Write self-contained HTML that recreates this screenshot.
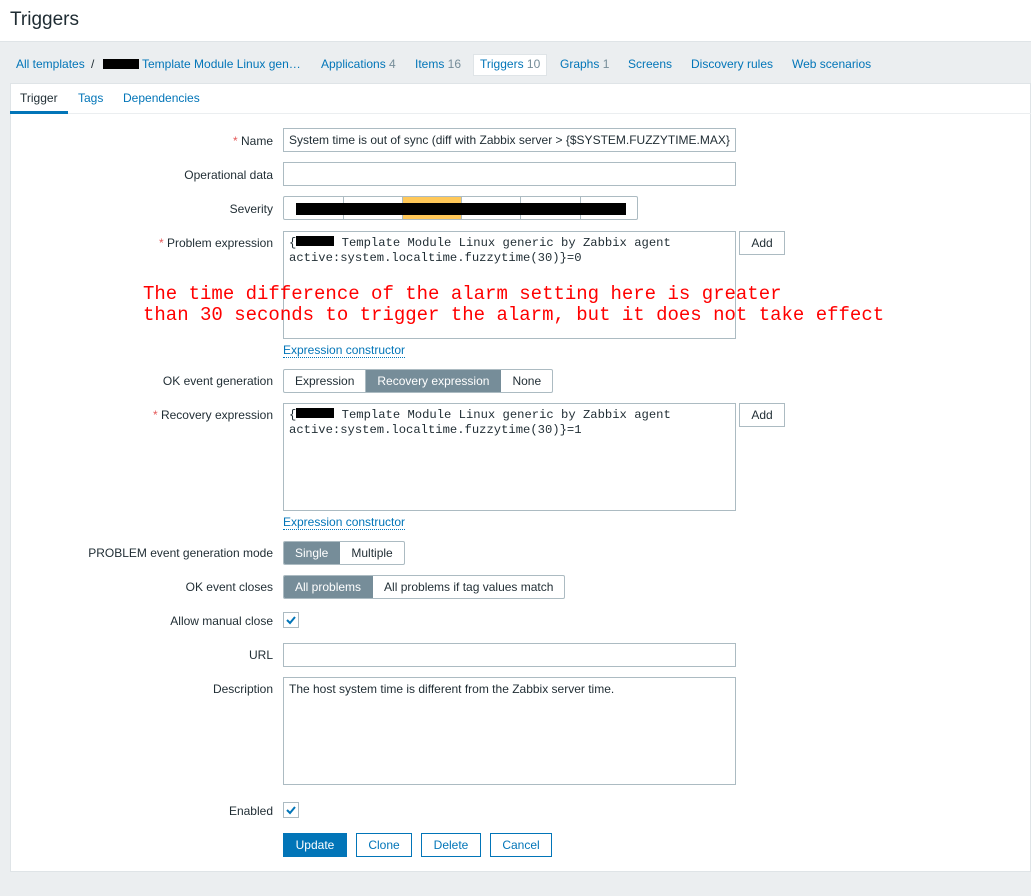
<!DOCTYPE html>
<html><head><style>
*{box-sizing:border-box;margin:0;padding:0}
body{width:1031px;height:896px;background:#ebeef0;font-family:"Liberation Sans",Arial,sans-serif;font-size:12px;color:#1f2c33;position:relative;overflow:hidden}
.a{position:absolute}
.hdr{left:0;top:0;width:1031px;height:42px;background:#fff;border-bottom:1px solid #dfe4e7}
.hdr h1{position:absolute;left:10px;top:9px;font-size:19px;font-weight:normal;color:#1f2c33}
.bc{top:55px;font-size:12px;color:#0275b8;line-height:19px}
.bc span.g{color:#768d99}
.box{left:10px;top:83px;width:1021px;height:789px;background:#fff;border:1px solid #dfe4e7}
.tab{top:91px;color:#0275b8}
.lbl{right:758px;text-align:right;white-space:nowrap;line-height:14px}
.req{color:#e45959}
.inp{left:283px;width:453px;height:24px;border:1px solid #acbbc2;background:#fff;padding:0 5px;line-height:22px;white-space:nowrap;overflow:hidden}
.ta{left:283px;width:453px;border:1px solid #acbbc2;background:#fff;padding:4px 5px;font-family:"Liberation Mono",monospace;font-size:12.2px;line-height:15px;color:#1f2c33}
.btn{height:24px;border:1px solid #acbbc2;background:#fff;line-height:22px;text-align:center;color:#1f2c33}
.seg{display:flex;height:24px;border:1px solid #acbbc2;border-radius:2px;overflow:hidden}
.seg div{padding:0 11px;line-height:22px;border-right:1px solid #acbbc2}
.seg div:last-child{border-right:none}
.seg .on{background:#768d99;color:#fff;border-color:#768d99}
.lnk{left:283px;color:#0275b8;border-bottom:1px dotted #0275b8;line-height:13px}
.chk{left:283px;width:16px;height:16px;border:1px solid #acbbc2;background:#fff}
.bk{background:#000}
.red{left:143px;top:284px;font-family:"Liberation Mono",monospace;font-size:19px;line-height:21px;color:#ff0000;white-space:pre}
</style></head><body>
<div class="a hdr"><h1>Triggers</h1></div>
<div class="a bc" style="left:16px">All templates</div>
<div class="a bc" style="left:91px;color:#1f2c33">/</div>
<div class="a bk" style="left:103px;top:59px;width:36px;height:10px"></div>
<div class="a bc" style="left:142px">Template Module Linux gen…</div>
<div class="a bc" style="left:321px">Applications <span class="g">4</span></div>
<div class="a bc" style="left:415px">Items <span class="g">16</span></div>
<div class="a" style="left:473px;top:54px;width:74px;height:22px;background:#fff;border:1px solid #dfe4e7"></div>
<div class="a bc" style="left:480px">Triggers <span class="g">10</span></div>
<div class="a bc" style="left:560px">Graphs <span class="g">1</span></div>
<div class="a bc" style="left:628px">Screens</div>
<div class="a bc" style="left:691px">Discovery rules</div>
<div class="a bc" style="left:792px">Web scenarios</div>
<div class="a box"></div>
<div class="a" style="left:10px;top:113px;width:1021px;height:1px;background:#ebeef0"></div>
<div class="a" style="left:10px;top:111px;width:58px;height:3px;background:#0275b8"></div>
<div class="a tab" style="left:20px;color:#1f2c33">Trigger</div>
<div class="a tab" style="left:78px">Tags</div>
<div class="a tab" style="left:123px">Dependencies</div>

<div class="a lbl" style="top:134px"><span class="req">*</span> Name</div>
<div class="a inp" style="top:128px">System time is out of sync (diff with Zabbix server &gt; {$SYSTEM.FUZZYTIME.MAX}</div>
<div class="a lbl" style="top:168px">Operational data</div>
<div class="a inp" style="top:162px"></div>
<div class="a lbl" style="top:202px">Severity</div>
<div class="a seg" style="left:283px;top:196px;width:355px">
<div style="width:60px"></div><div style="width:59px"></div><div style="width:59px;background:#ffc859"></div><div style="width:59px"></div><div style="width:60px"></div><div style="flex:1"></div></div>
<div class="a bk" style="left:296px;top:203px;width:330px;height:12px"></div>
<div class="a lbl" style="top:236px"><span class="req">*</span> Problem expression</div>
<div class="a ta" style="top:231px;height:108px">{<span style="display:inline-block;width:38px;height:10px;background:#000"></span> Template Module Linux generic by Zabbix agent<br>active:system.localtime.fuzzytime(30)}=0</div>
<div class="a btn" style="left:739px;top:231px;width:46px">Add</div>
<div class="a red">The time difference of the alarm setting here is greater
than 30 seconds to trigger the alarm, but it does not take effect</div>
<div class="a lnk" style="left:283px;top:344px">Expression constructor</div>
<div class="a lbl" style="top:374px">OK event generation</div>
<div class="a seg" style="left:283px;top:369px"><div>Expression</div><div class="on">Recovery expression</div><div>None</div></div>
<div class="a lbl" style="top:408px"><span class="req">*</span> Recovery expression</div>
<div class="a ta" style="top:403px;height:108px">{<span style="display:inline-block;width:38px;height:10px;background:#000"></span> Template Module Linux generic by Zabbix agent<br>active:system.localtime.fuzzytime(30)}=1</div>
<div class="a btn" style="left:739px;top:403px;width:46px">Add</div>
<div class="a lnk" style="top:516px">Expression constructor</div>
<div class="a lbl" style="top:546px">PROBLEM event generation mode</div>
<div class="a seg" style="left:283px;top:541px"><div class="on">Single</div><div>Multiple</div></div>
<div class="a lbl" style="top:580px">OK event closes</div>
<div class="a seg" style="left:283px;top:575px"><div class="on">All problems</div><div>All problems if tag values match</div></div>
<div class="a lbl" style="top:614px">Allow manual close</div>
<div class="a chk" style="top:612px"><svg width="14" height="14" viewBox="0 0 14 14"><path d="M3 7l3 3 5-6" stroke="#0275b8" stroke-width="2" fill="none"/></svg></div>
<div class="a lbl" style="top:648px">URL</div>
<div class="a inp" style="top:643px"></div>
<div class="a lbl" style="top:682px">Description</div>
<div class="a ta" style="top:677px;height:108px;font-family:'Liberation Sans',Arial,sans-serif;font-size:12px">The host system time is different from the Zabbix server time.</div>
<div class="a lbl" style="top:804px">Enabled</div>
<div class="a chk" style="top:802px"><svg width="14" height="14" viewBox="0 0 14 14"><path d="M3 7l3 3 5-6" stroke="#0275b8" stroke-width="2" fill="none"/></svg></div>
<div class="a btn" style="left:283px;top:833px;width:64px;background:#0275b8;border-color:#0275b8;color:#fff">Update</div>
<div class="a btn" style="left:356px;top:833px;width:56px;color:#0275b8;border-color:#0275b8">Clone</div>
<div class="a btn" style="left:421px;top:833px;width:60px;color:#0275b8;border-color:#0275b8">Delete</div>
<div class="a btn" style="left:490px;top:833px;width:62px;color:#0275b8;border-color:#0275b8">Cancel</div>
</body></html>
